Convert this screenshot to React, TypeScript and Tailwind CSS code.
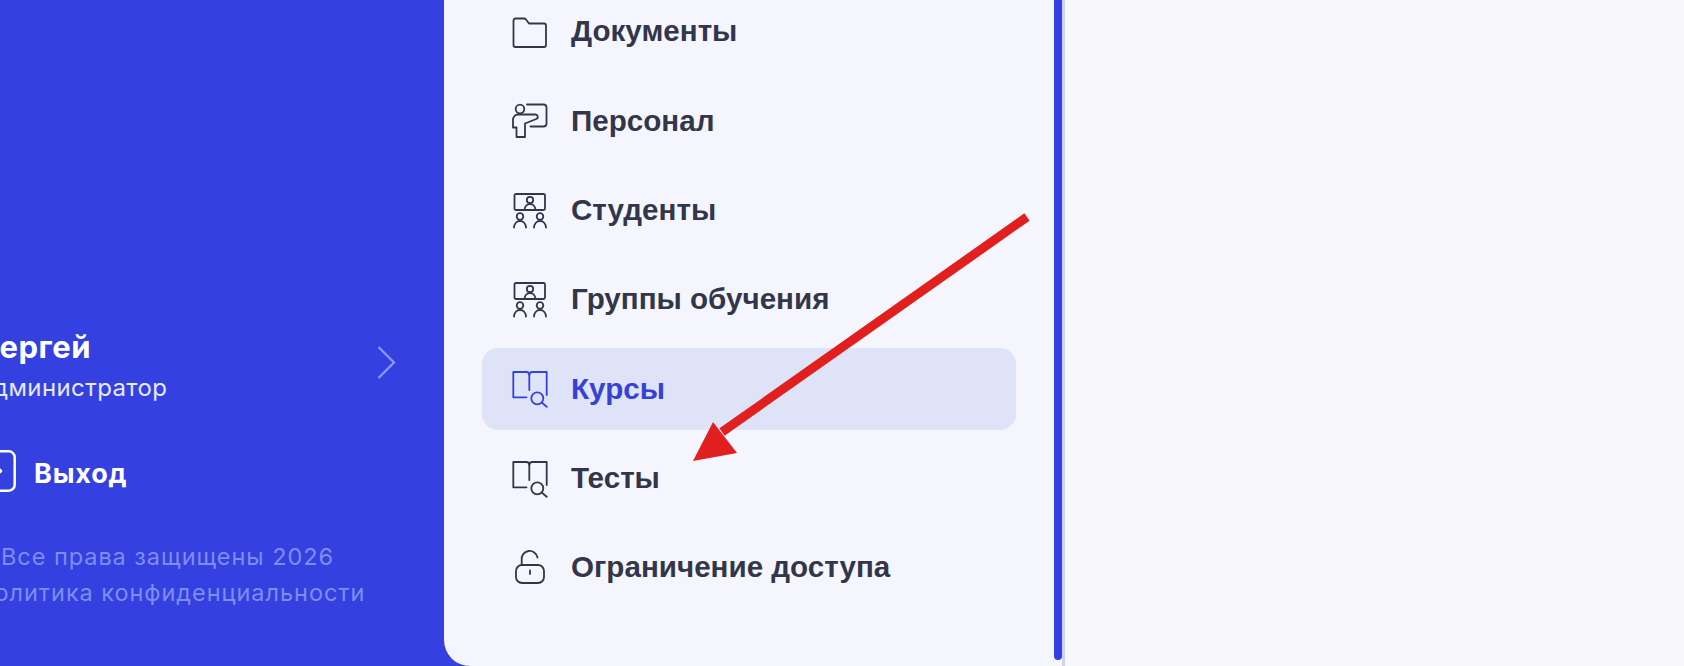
import { ReactNode } from 'react';

const FolderIcon = () => (
  <path d="M3.500 33H32a2 2 0 0 0 2-2V11.500a2 2 0 0 0-2-2H17l-3-4a2 2 0 0 0-1.600-1H3.500a2 2 0 0 0-2 2V31a2 2 0 0 0 2 2z" />
);

const TeacherIcon = () => (
  <>
    <circle cx="8" cy="6" r="4.300" />
    <path d="M15 1.500h16.500a3 3 0 0 1 3 3V20.500a3 3 0 0 1-3 3H18.500" />
    <path d="M6 11.500h17.500c2.500 0 3.200 3.600.8 4.500L13 20.500V34H4.500V24.500H1V17c0-3 2.200-5.500 5-5.500z" />
  </>
);

const ClassIcon = () => (
  <>
    <rect x="2.500" y="1" width="30.500" height="16" rx="1.500" />
    <circle cx="18" cy="7" r="3.200" />
    <path d="M12.500 16.500c.3-3.200 2.600-5.500 5.500-5.500s5.200 2.300 5.500 5.500" />
    <circle cx="8" cy="23.500" r="3.300" />
    <path d="M2 34.500c.2-3.900 2.700-6.500 6-6.500s5.800 2.600 6 6.500" />
    <circle cx="28" cy="23.500" r="3.300" />
    <path d="M22 34.500c.2-3.900 2.700-6.500 6-6.500s5.800 2.600 6 6.500" />
  </>
);

const BookSearchIcon = () => (
  <>
    <path d="M14.500 26.300H1.300V1h13c2 0 3 1.300 3 3V19" />
    <path d="M17.300 4c0-2 1-3 3-3h14.400v23" />
    <circle cx="25.300" cy="27.300" r="6" />
    <path d="M29.700 31.500l5 4.300" />
  </>
);

const LockIcon = () => (
  <>
    <rect x="4" y="15" width="28" height="18" rx="6" />
    <path d="M9.700 15V10a8 8 0 0 1 15.800-2.500" />
    <path d="M18 20.500v3.500" />
  </>
);

const menu: { label: string; icon: ReactNode; active?: boolean }[] = [
  { label: 'Документы', icon: <FolderIcon /> },
  { label: 'Персонал', icon: <TeacherIcon /> },
  { label: 'Студенты', icon: <ClassIcon /> },
  { label: 'Группы обучения', icon: <ClassIcon /> },
  { label: 'Курсы', icon: <BookSearchIcon />, active: true },
  { label: 'Тесты', icon: <BookSearchIcon /> },
  { label: 'Ограничение доступа', icon: <LockIcon /> },
];

const App = () => {
  return (
    <div className="relative flex h-screen w-screen overflow-hidden bg-[#3440df]">
      {/* Blue sidebar, scrolled sideways so its left edge is cut off */}
      <aside className="flex w-[444px] shrink-0 flex-col justify-end overflow-hidden pb-[55px] font-['Inter',sans-serif]">
        <div className="-ml-[24px] w-[468px]">
          <div className="flex items-start justify-between pr-[48px]">
            <div className="flex flex-col gap-[8px]">
              <div className="-mt-[2px] text-[31px] leading-[36px] font-bold tracking-[0.5px] text-white">Сергей</div>
              <div className="text-[24px] leading-[30px] tracking-[0.4px] text-[#e6e9ff]">Администратор</div>
            </div>
            <svg className="mt-[15px]" width="19" height="33" viewBox="0 0 19 33" fill="none" stroke="#8b9bf5" strokeWidth="2.200">
              <path d="M1.500 1l15.500 15.500L1.500 32" />
            </svg>
          </div>

          <div className="mt-[47px] flex items-center gap-[18px]">
            <svg width="40" height="42" viewBox="0 0 40 42" fill="none" stroke="white" strokeWidth="2.500" strokeLinecap="round" strokeLinejoin="round">
              <rect x="1.300" y="1.300" width="37.400" height="39.400" rx="6" />
              <path d="M16 21h9M22 18l3 3-3 3" />
            </svg>
            <span className="mt-[3px] -mb-[3px] text-[27px] leading-[42px] font-bold tracking-[0.8px] text-white">Выход</span>
          </div>

          <div className="mt-[47px] text-[23.500px] leading-[36px] tracking-[0.95px] text-[#7e8df2]">
            <div className="-ml-[5px]">© Все права защищены 2026</div>
            <div>Политика конфиденциальности</div>
          </div>
        </div>
      </aside>

      {/* Menu panel */}
      <div className="flex w-[621px] shrink-0 overflow-hidden rounded-bl-[26px] bg-[#f5f6fd] font-['Liberation_Sans',sans-serif]">
        <nav className="-mt-[9px] flex flex-1 flex-col gap-[7px] px-[38px]">
          {menu.map((item) => (
            <div
              key={item.label}
              className={`flex h-[82.300px] shrink-0 items-center gap-[23px] rounded-[16px] pl-[30px] ${
                item.active ? 'bg-[#dfe3f7] text-[#3641d8]' : 'text-[#33364a]'
              }`}
            >
              <svg
                width="36"
                height="36"
                viewBox="0 0 36 36"
                fill="none"
                stroke="currentColor"
                strokeWidth="1.800"
                strokeLinecap="round"
                strokeLinejoin="round"
                className="shrink-0 overflow-visible"
              >
                {item.icon}
              </svg>
              <span className="pb-[1px] text-[29.600px] font-bold">{item.label}</span>
            </div>
          ))}
        </nav>

        {/* Scrollbar */}
        <div className="flex w-[11px] shrink-0">
          <div className="mb-[6px] w-[8px] rounded-b-full bg-[#3440df]" />
          <div className="w-[3px] bg-[#cfd3f3]" />
        </div>
      </div>

      <main className="flex-1 bg-[#f8f8fc]" />

      {/* Red annotation arrow drawn over the page */}
      <svg className="pointer-events-none absolute top-0 left-0" width="1684" height="666" viewBox="0 0 1684 666">
        <path d="M1027 217L722 432" stroke="#e21f1f" strokeWidth="9" fill="none" />
        <path d="M693 461L713 422L737 453z" fill="#e21f1f" />
      </svg>
    </div>
  );
};

export default App;
